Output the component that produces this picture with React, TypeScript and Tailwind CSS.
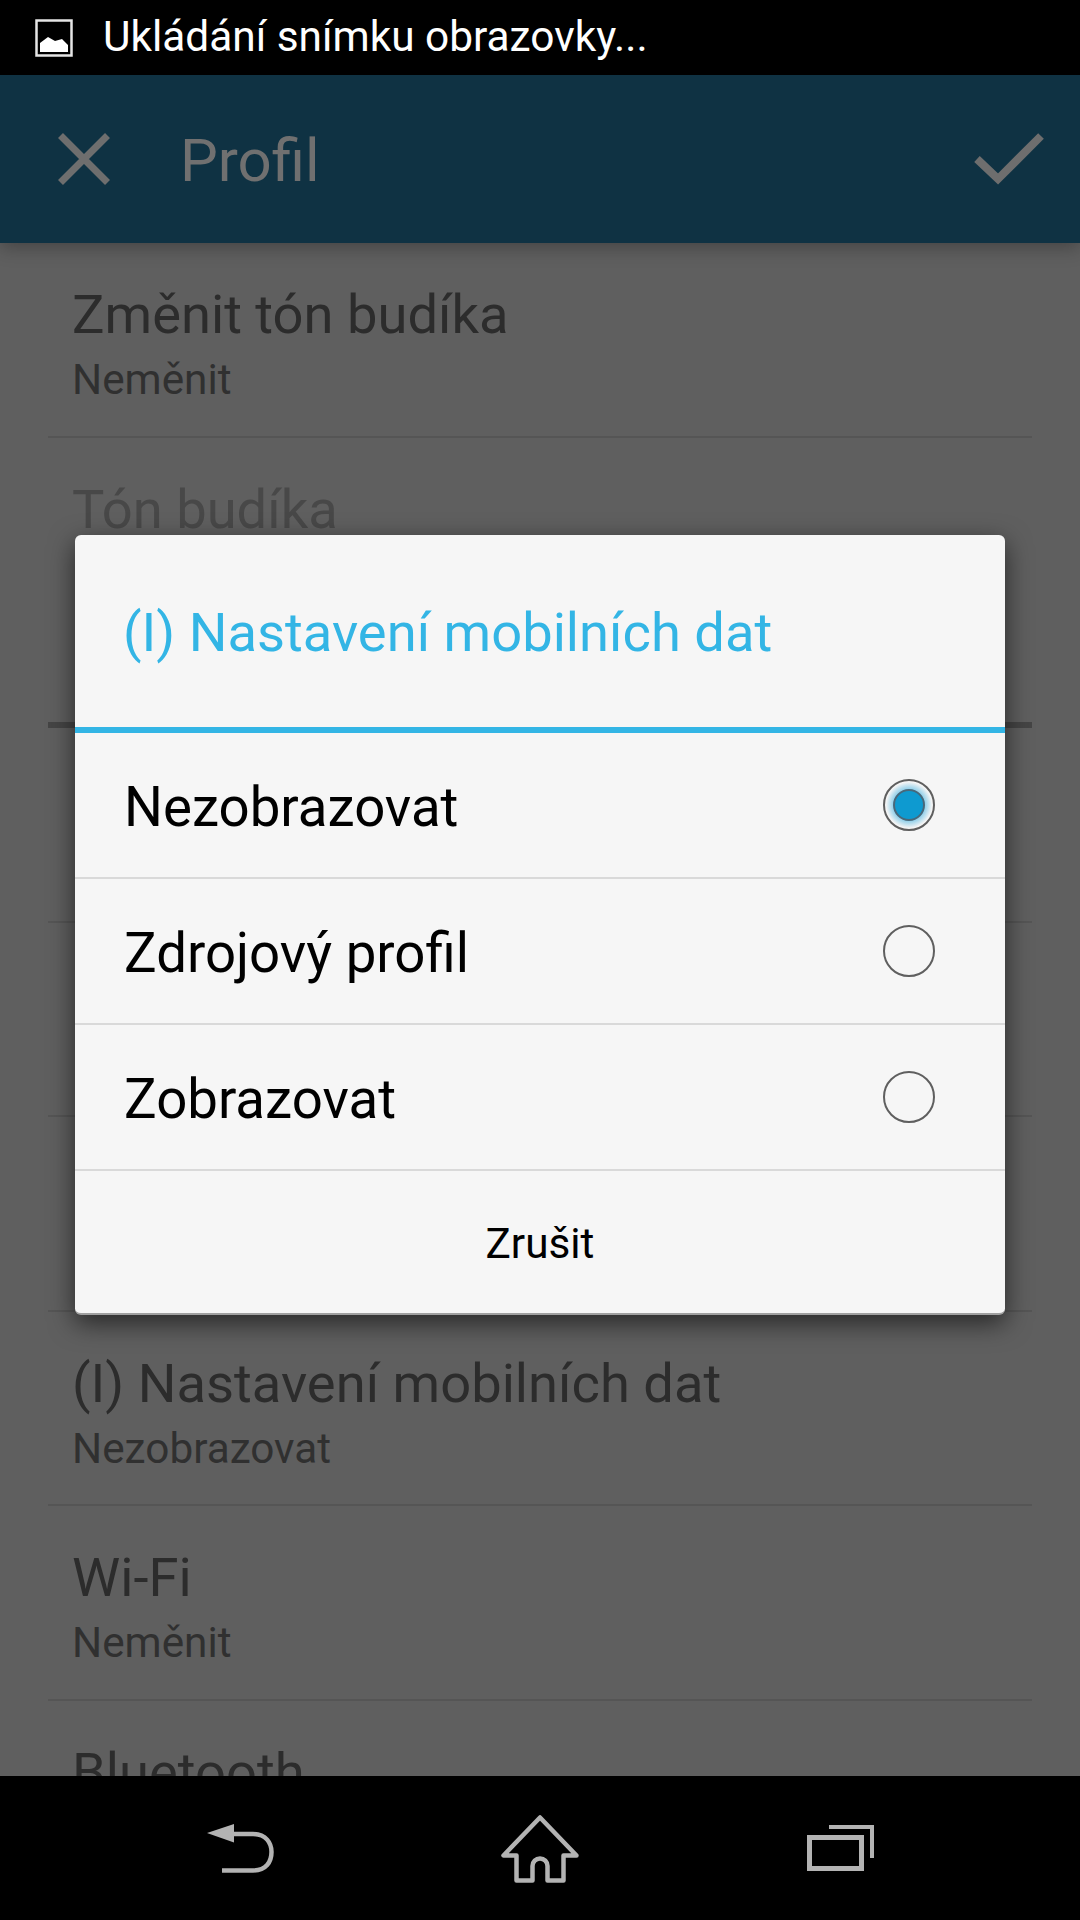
const rowClass = "h-[194.5px] mx-12 px-6 border-b-2 flex flex-col pt-10";

const PrefRow = ({ title, sub, disabled, noLine }: { title?: string; sub?: string; disabled?: boolean; noLine?: boolean }) => (
  <div className={`${rowClass} ${noLine ? "border-transparent" : "border-[#555555]"}`}>
    {title && <div className={`text-[54.3px] leading-[63px] ${disabled ? "text-[#484848]" : "text-[#2c2c2c]"}`}>{title}</div>}
    {sub && <div className="text-[42.3px] leading-[63px] mt-[2px] text-[#303030]">{sub}</div>}
  </div>
);

const Radio = ({ checked }: { checked?: boolean }) => (
  <div className={`w-[52px] h-[52px] rounded-full border-2 border-[#5f5f5f] flex items-center justify-center ${checked ? "bg-[radial-gradient(circle_closest-side,#7cc8e8_60%,#f5f5f5_96%)]" : ""}`}>
    {checked && <div className="w-[32px] h-[32px] rounded-full bg-[#0e9ad0] border-2 border-[#48687a]" />}
  </div>
);

const Option = ({ label, checked }: { label: string; checked?: boolean }) => (
  <div className="h-[146px] border-b-2 border-[#d9d9d9] flex items-center justify-between pl-[49px] pr-[70px]">
    <span className="text-[54.6px] mt-[5px] text-black">{label}</span>
    <Radio checked={checked} />
  </div>
);

export default function App() {
  return (
    <div className="w-[1080px] h-[1920px] flex flex-col bg-black font-['Roboto',sans-serif] overflow-hidden">
      {/* status bar */}
      <div className="h-[75px] shrink-0 flex items-center pl-[35px] bg-black">
        <svg width="38" height="38" viewBox="0 0 38 38" fill="none">
          <rect x="1.5" y="1.5" width="35" height="35" stroke="#e6e6e6" strokeWidth="2.5" />
          <path d="M5 33 V24 L13 18 L20 22 L27 20 L33 26 V33 Z" fill="#ffffff" />
        </svg>
        <span className="ml-[30px] mb-[2px] text-[42.4px] text-white">Ukládání snímku obrazovky...</span>
      </div>

      <div className="relative flex-1 bg-[#5f5f5f] overflow-hidden">
        {/* action bar */}
        <div className="h-[168px] bg-[#0f3243] flex items-center justify-between pl-[58px] pr-[36px] shadow-[0_4px_18px_rgba(0,0,0,0.3)] relative">
          <div className="flex items-center">
            <svg width="52" height="52" viewBox="0 0 52 52" fill="none" stroke="#6e6e6e" strokeWidth="7">
              <path d="M2.5 2.5 L49.5 49.5 M49.5 2.5 L2.5 49.5" />
            </svg>
            <span className="ml-[70px] mt-[4px] text-[60px] text-[#707070]">Profil</span>
          </div>
          <svg width="70" height="52" viewBox="0 0 70 52" fill="none" stroke="#6e6e6e" strokeWidth="8">
            <path d="M3 26 L24 46 L67 3" />
          </svg>
        </div>

        {/* settings list behind the dialog */}
        <PrefRow title="Změnit tón budíka" sub="Neměnit" />
        <PrefRow title="Tón budíka" disabled noLine />
        <div className="h-[96px] mx-12 border-b-[6px] border-[#454545]" />
        <PrefRow />
        <PrefRow />
        <PrefRow />
        <PrefRow title="(I) Nastavení mobilních dat" sub="Nezobrazovat" />
        <PrefRow title="Wi-Fi" sub="Neměnit" />
        <PrefRow title="Bluetooth" />

        {/* dialog */}
        <div className="absolute left-[75px] top-[460px] w-[930px] h-[780px] bg-[#f6f6f6] rounded-[6px] flex flex-col border-b-2 border-[#a0a0a0] shadow-[0_8px_26px_rgba(0,0,0,0.6)]">
          <div className="h-[198px] border-b-[6px] border-[#33b5e5] flex items-center pl-[48px] pt-1">
            <span className="text-[54.3px] text-[#33b5e5]">(I) Nastavení mobilních dat</span>
          </div>
          <Option label="Nezobrazovat" checked />
          <Option label="Zdrojový profil" />
          <Option label="Zobrazovat" />
          <div className="flex-1 flex items-center justify-center pt-1 text-[42.3px] text-black">Zrušit</div>
        </div>
      </div>

      {/* navigation bar */}
      <div className="h-[144px] shrink-0 bg-black flex items-center justify-center">
        <div className="w-[300px] flex justify-center">
          <svg width="67" height="49" viewBox="0 0 67 49" fill="none" stroke="#b3b3b3" strokeWidth="4.5">
            <path d="M0 9 L27 0 V18.5 Z" fill="#b3b3b3" stroke="none" />
            <path d="M27 10 H46 C59 10 64.5 19 64.5 28 C64.5 38 59 46.5 46 46.5 H15" />
          </svg>
        </div>
        <div className="w-[300px] flex justify-center">
          <svg width="78" height="69" viewBox="0 0 78 69" fill="none" stroke="#b3b3b3" strokeWidth="4.5" strokeLinejoin="round">
            <path d="M39 3.5 L2.5 41.5 H15.5 V66.5 H31.5 V52 A7.5 7.5 0 0 1 46.5 52 V66.5 H62.5 V41.5 H75.5 Z" />
          </svg>
        </div>
        <div className="w-[300px] flex justify-center">
          <svg width="67" height="46" viewBox="0 0 67 46" fill="none" stroke="#b3b3b3">
            <rect x="2.5" y="12.5" width="52" height="31" strokeWidth="5" />
            <path d="M22 2 H65 V33" strokeWidth="4" />
          </svg>
        </div>
      </div>
    </div>
  );
}
